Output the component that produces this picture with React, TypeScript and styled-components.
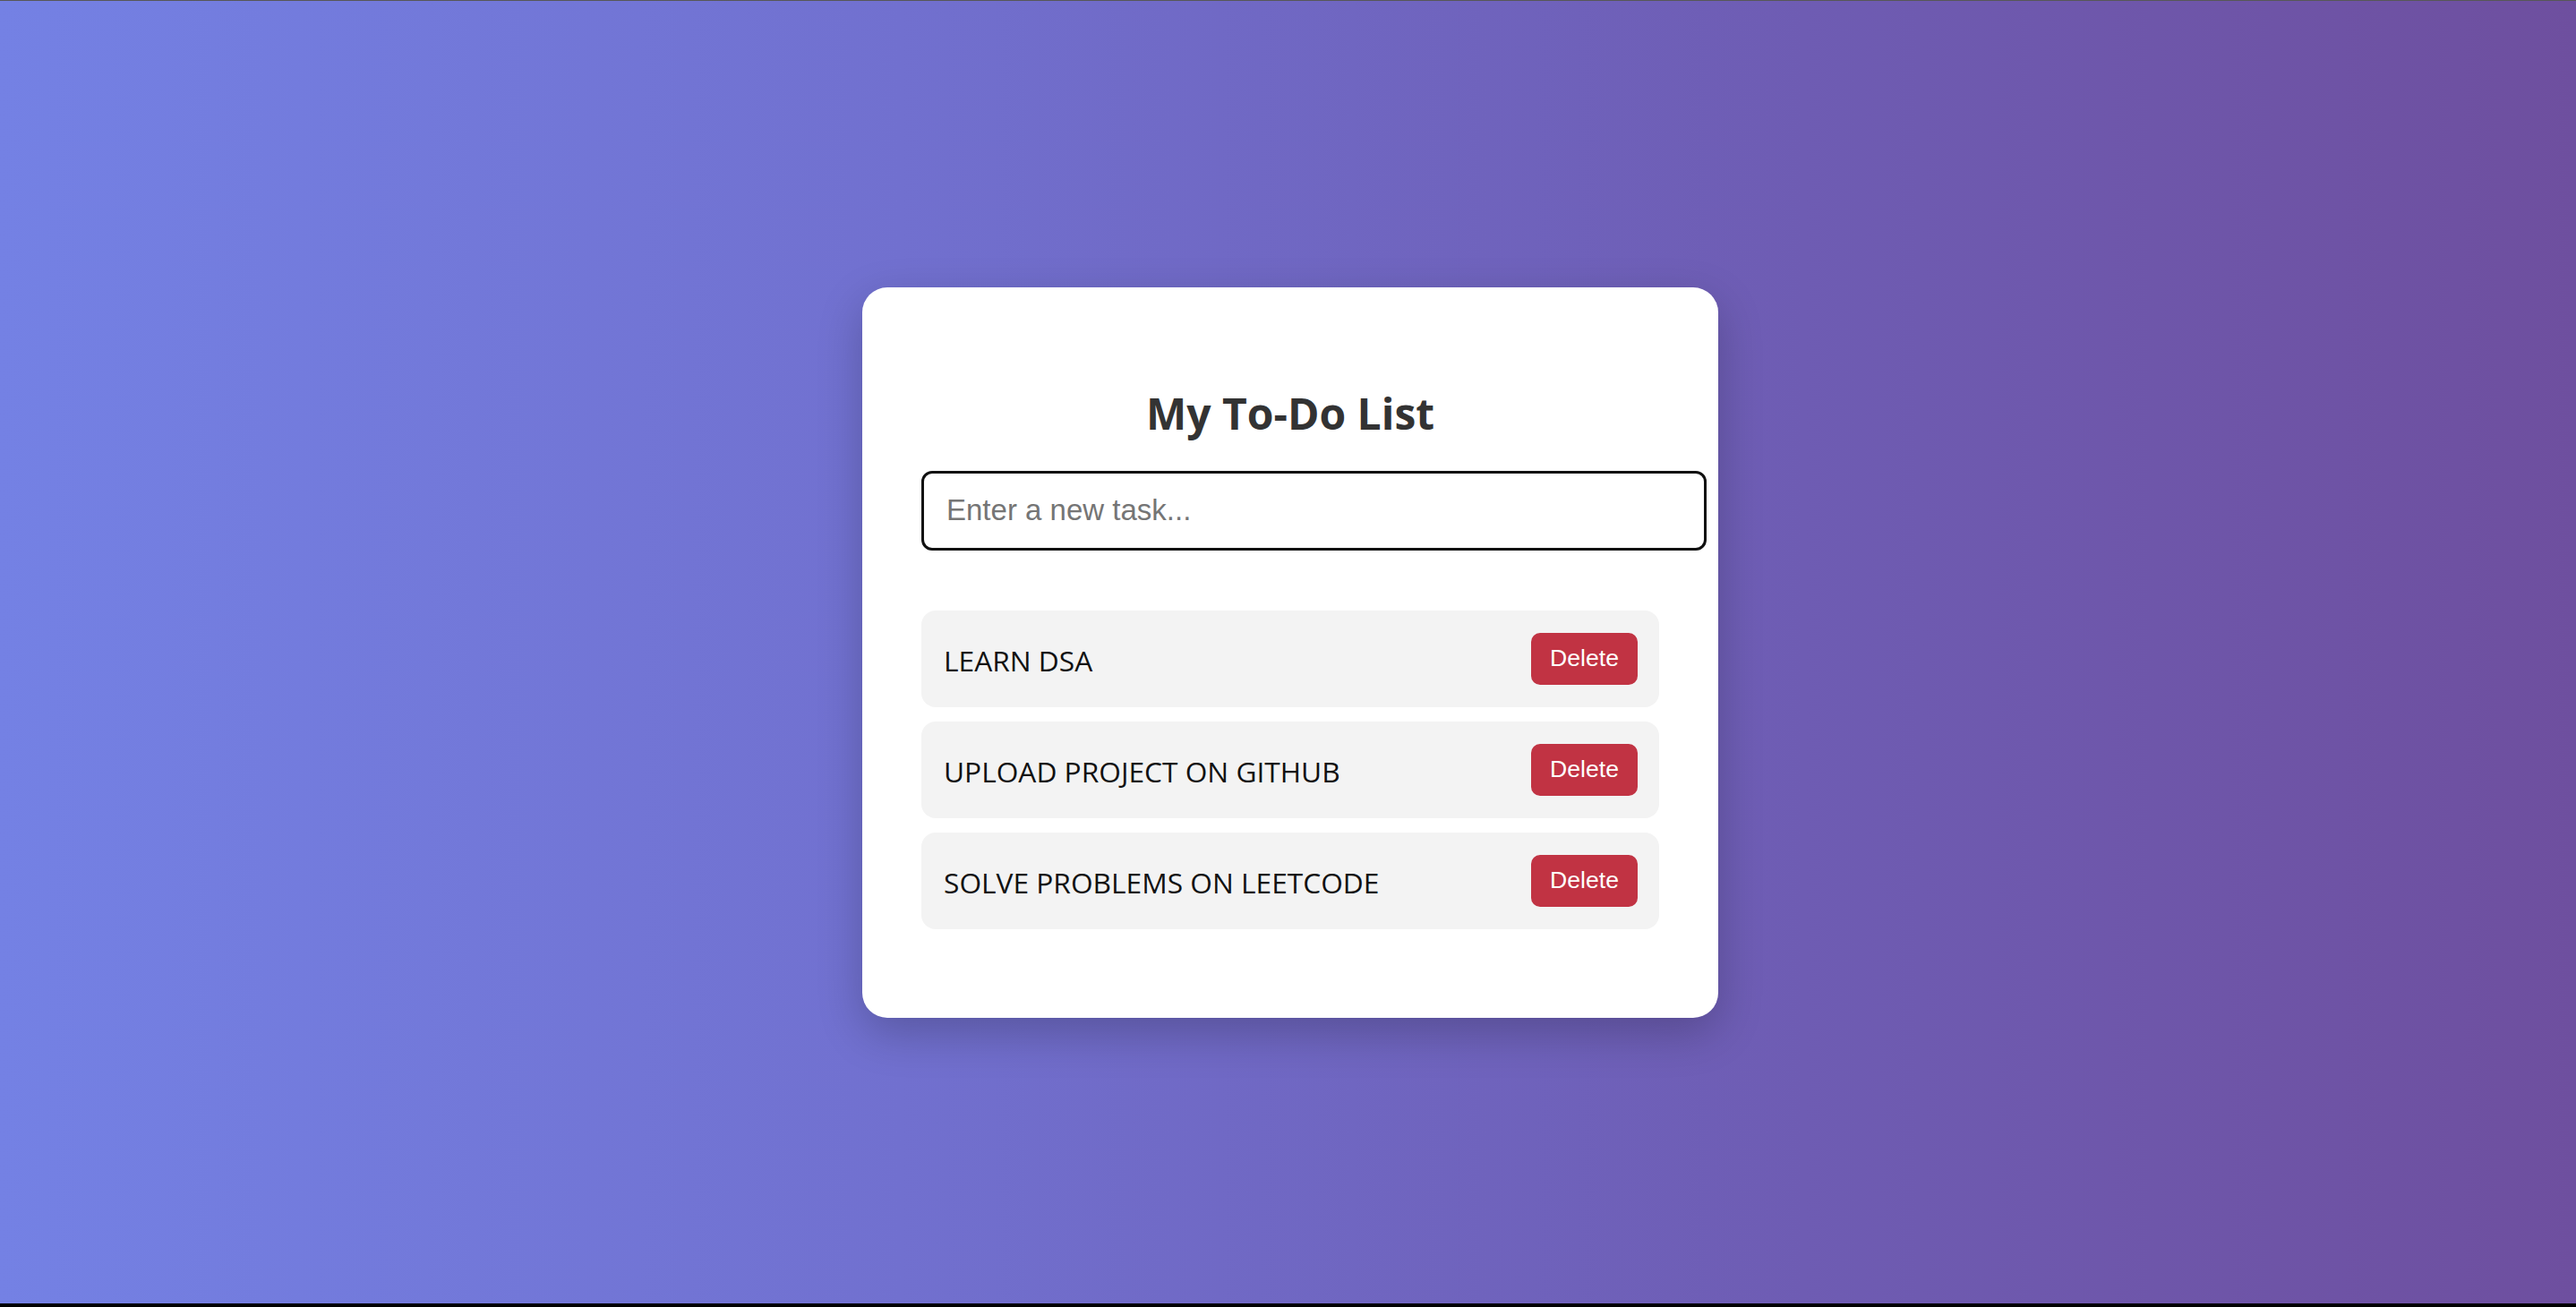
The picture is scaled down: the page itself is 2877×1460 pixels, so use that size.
import React, { useState } from "react";
import styled, { createGlobalStyle } from "styled-components";

const GlobalStyle = createGlobalStyle`
  html, body {
    margin: 0;
    padding: 0;
    background: #000;
  }
  body {
    font-family: "Open Sans", "Noto Sans", sans-serif;
  }
`;

const Page = styled.div`
  box-sizing: border-box;
  height: calc(100vh - 4px);
  border-top: 1px solid #575757;
  padding-left: 5px;
  background: linear-gradient(to right, #7481e4 0%, #7170cf 35%, #6e5cb3 70%, #6e4f9f 100%);
  display: flex;
  align-items: center;
  justify-content: center;
`;

const Card = styled.div`
  box-sizing: border-box;
  width: 956px;
  background: #fff;
  border-radius: 28px;
  padding: 108px 66px 99px;
  box-shadow: 0 17px 50px rgba(0, 0, 0, 0.22);
  display: flex;
  flex-direction: column;
`;

const Title = styled.h2`
  margin: 0 0 31px;
  text-align: center;
  font-family: "Open Sans", sans-serif;
  font-weight: 700;
  font-size: 48px;
  line-height: 66px;
  color: #333;
`;

const TaskInput = styled.input`
  box-sizing: content-box;
  width: 100%;
  height: 37px;
  padding: 23px 22px 23px 25px;
  border: 3px solid #111;
  border-radius: 12px;
  outline: none;
  font-family: "Liberation Sans", Arial, sans-serif;
  font-size: 33px;
  color: #222;
  background: #fff;
  caret-color: #000;
  &::placeholder {
    color: #757575;
  }
  &:focus {
    outline: none;
    border-color: #111;
  }
`;

const List = styled.ul`
  list-style: none;
  margin: 67px 0 0;
  padding: 0;
  display: flex;
  flex-direction: column;
  gap: 16px;
`;

const Item = styled.li`
  box-sizing: border-box;
  height: 108px;
  padding: 0 24px 0 25px;
  background: #f3f3f3;
  border-radius: 16px;
  display: flex;
  align-items: center;
  justify-content: space-between;
`;

const ItemText = styled.span`
  font-family: "Open Sans", sans-serif;
  font-size: 31.7px;
  color: #111;
  padding-top: 4px;
`;

const DeleteButton = styled.button`
  box-sizing: border-box;
  height: 58px;
  width: 119px;
  padding: 0;
  border: none;
  border-radius: 10px;
  background: #c13343;
  color: #fff;
  font-family: "Liberation Sans", Arial, sans-serif;
  font-size: 26.6px;
  cursor: pointer;
`;

const initialTasks = ["LEARN DSA", "UPLOAD PROJECT ON GITHUB", "SOLVE PROBLEMS ON LEETCODE"];

export default function App() {
  const [tasks, setTasks] = useState<string[]>(initialTasks);
  const [value, setValue] = useState("");

  return (
    <>
      <GlobalStyle />
      <Page>
        <Card>
          <Title>My To-Do List</Title>
          <TaskInput
            autoFocus
            placeholder="Enter a new task..."
            value={value}
            onChange={(e) => setValue(e.target.value)}
            onKeyDown={(e) => {
              if (e.key === "Enter" && value.trim()) {
                setTasks([...tasks, value.trim().toUpperCase()]);
                setValue("");
              }
            }}
          />
          <List>
            {tasks.map((t, i) => (
              <Item key={i}>
                <ItemText>{t}</ItemText>
                <DeleteButton onClick={() => setTasks(tasks.filter((_, j) => j !== i))}>Delete</DeleteButton>
              </Item>
            ))}
          </List>
        </Card>
      </Page>
    </>
  );
}
